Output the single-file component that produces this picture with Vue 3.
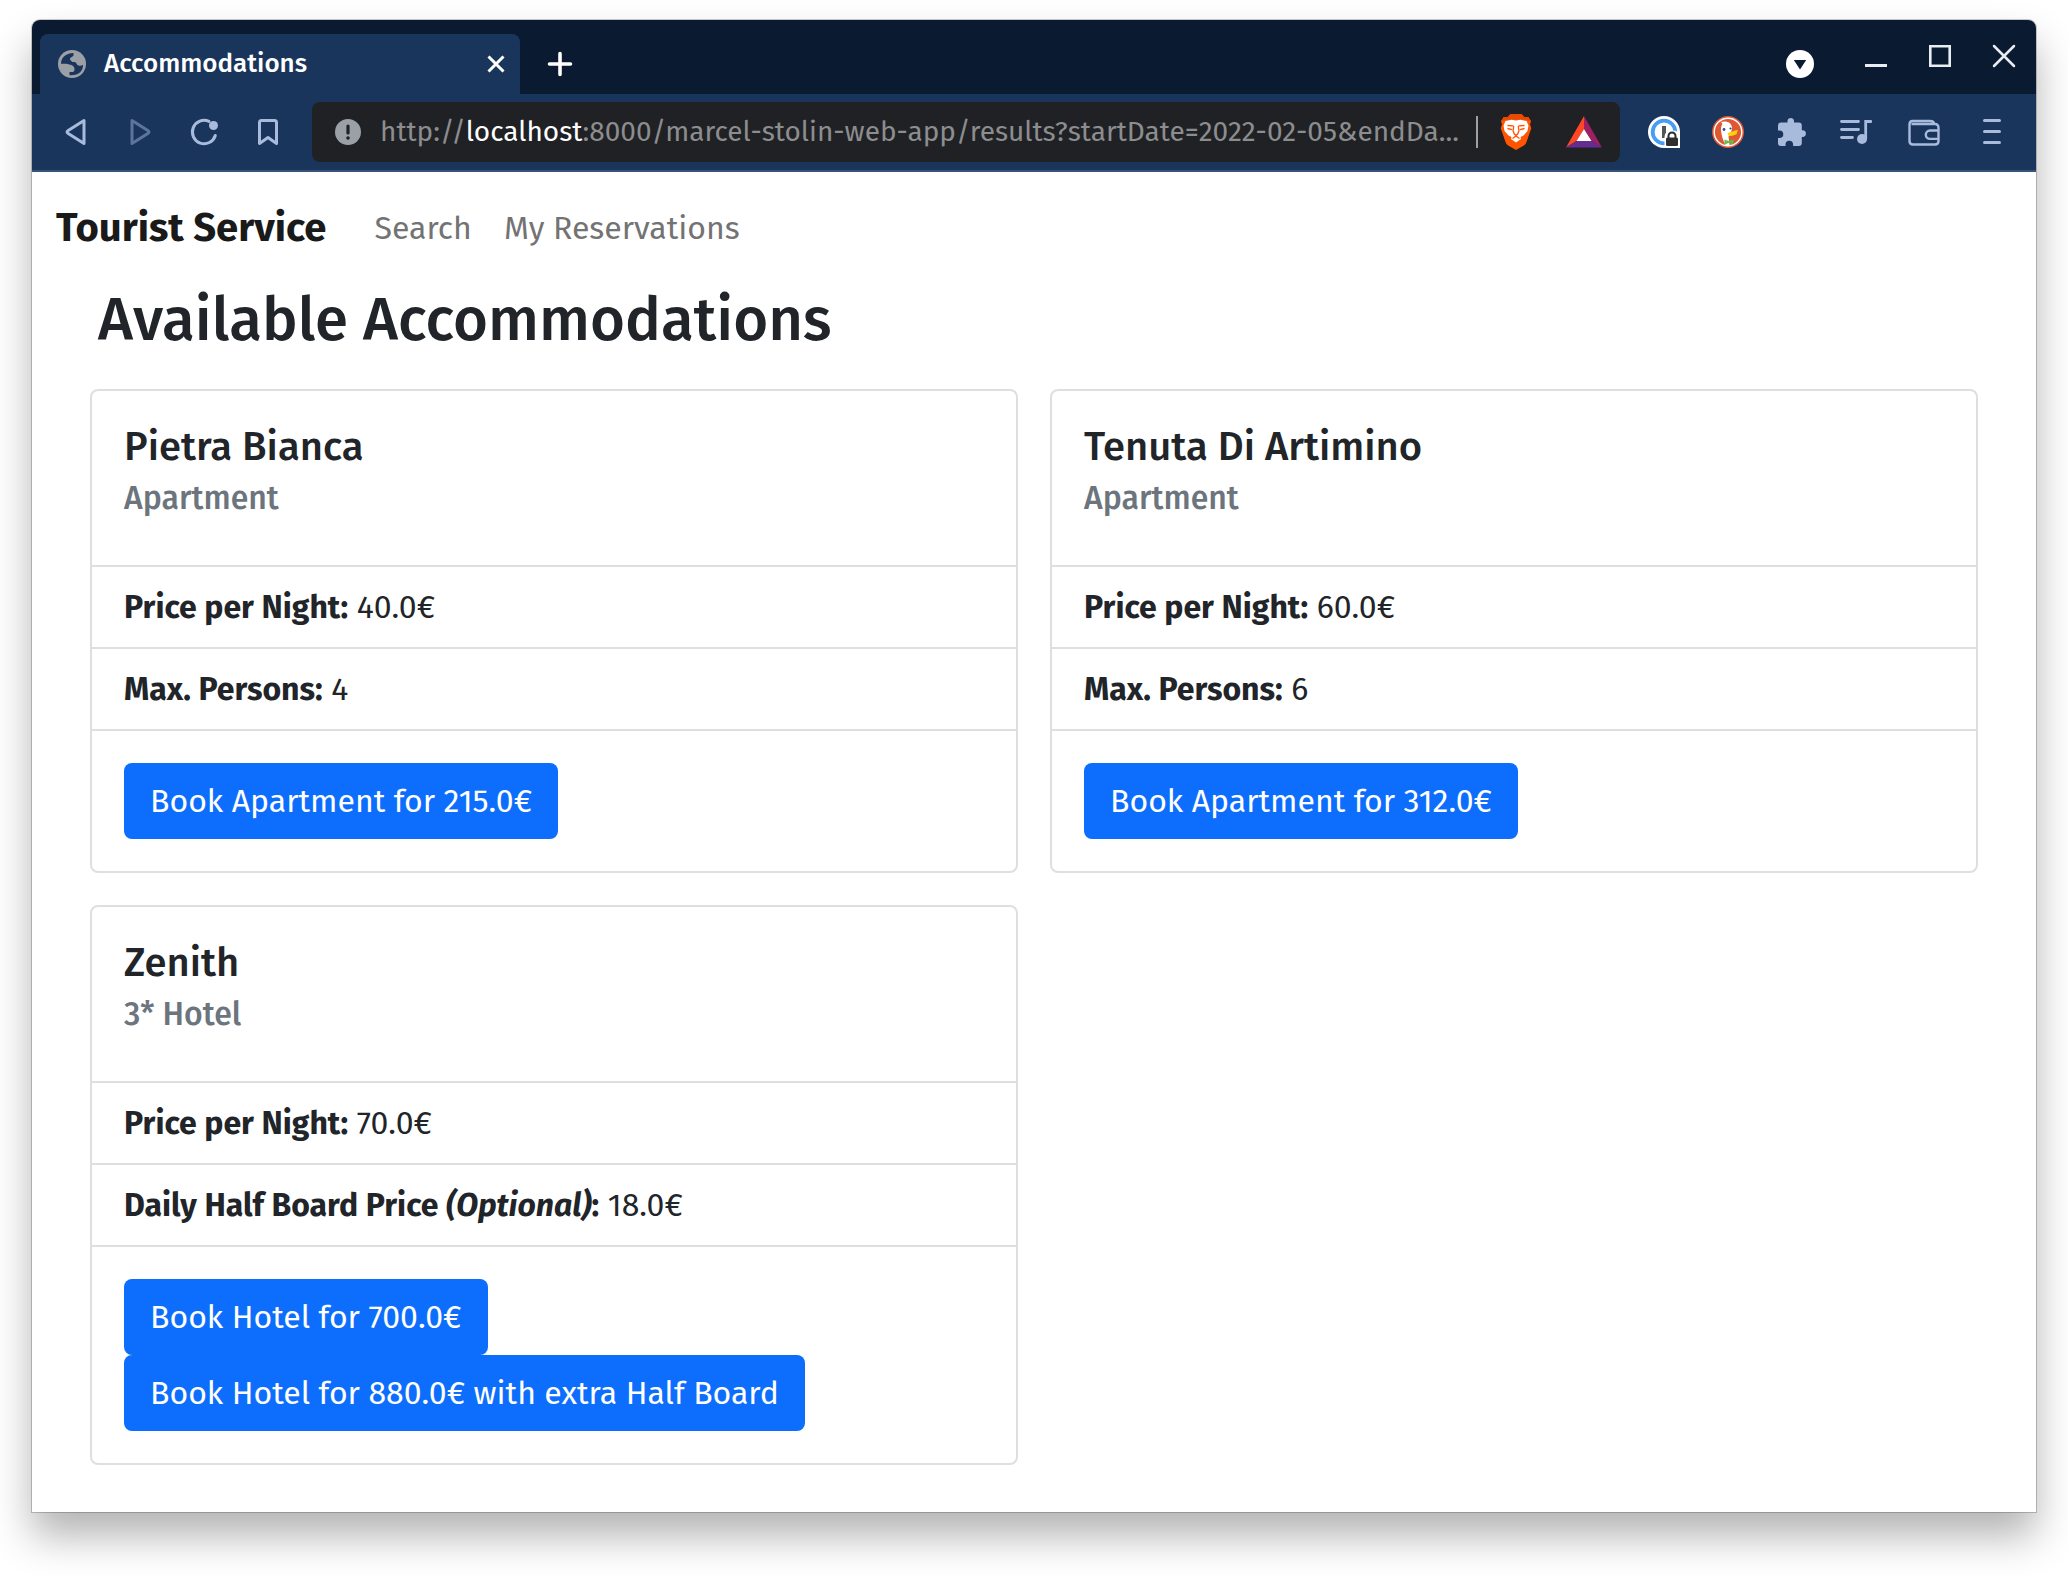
<script setup>
const navLinks = ['Search', 'My Reservations']

const accommodations = [
  {
    name: 'Pietra Bianca',
    kind: 'Apartment',
    facts: [
      { label: 'Price per Night', value: '40.0€' },
      { label: 'Max. Persons', value: '4' },
    ],
    offers: ['Book Apartment for 215.0€'],
  },
  {
    name: 'Tenuta Di Artimino',
    kind: 'Apartment',
    facts: [
      { label: 'Price per Night', value: '60.0€' },
      { label: 'Max. Persons', value: '6' },
    ],
    offers: ['Book Apartment for 312.0€'],
  },
  {
    name: 'Zenith',
    kind: '3* Hotel',
    facts: [
      { label: 'Price per Night', value: '70.0€' },
      { label: 'Daily Half Board Price', note: '(Optional)', value: '18.0€' },
    ],
    offers: ['Book Hotel for 700.0€', 'Book Hotel for 880.0€ with extra Half Board'],
  },
]
</script>

<template>
  <div class="desktop">
    <div class="window">
      <header class="titlebar">
        <div class="tab">
          <svg class="favicon" viewBox="0 0 28 28" width="28" height="28" aria-hidden="true">
            <circle cx="14" cy="14" r="14" fill="#9aa0a6" />
            <path d="M3 13.700C3 8 7.500 3.200 15.500 3v2c0 2-3.500 2-3.500 4s2 1.500 2 3h2.500c2 0 2 3 4 3.500s3 .2 4.500-.8c.3 6-4 11-13.500 10.500v-3.200H15c2-1 2-4 .5-5.500-1.500-2-5.500-2.800-12.500-2.800z" fill="#1a355b" />
          </svg>
          <span class="tab-title">Accommodations</span>
          <button class="icon-button" aria-label="Close tab">
            <svg viewBox="0 0 32 32" width="32" height="32"><path d="M8.500 8.500l15 15m0-15l-15 15" stroke="#fff" stroke-width="3" fill="none" /></svg>
          </button>
        </div>
        <button class="icon-button new-tab" aria-label="New tab">
          <svg viewBox="0 0 32 32" width="32" height="32"><path d="M16 5.500v21M5.500 16h21" stroke="#fff" stroke-width="3.600" stroke-linecap="round" /></svg>
        </button>
        <div class="window-controls">
          <button class="icon-button tab-search" aria-label="Search tabs">
            <svg viewBox="0 0 32 32" width="32" height="32"><circle cx="16" cy="16" r="14" fill="#fff" /><path d="M9.800 12h12.400L16 21.500z" fill="#0a1a31" /></svg>
          </button>
          <button class="icon-button" aria-label="Minimize">
            <svg viewBox="0 0 32 32" width="32" height="32"><path d="M5 25.500h22" stroke="#e9ecf0" stroke-width="3" /></svg>
          </button>
          <button class="icon-button" aria-label="Maximize">
            <svg viewBox="0 0 32 32" width="32" height="32"><path d="M6.300 6.300h19.400v19.400H6.300z" stroke="#e9ecf0" stroke-width="2.600" fill="none" /></svg>
          </button>
          <button class="icon-button" aria-label="Close">
            <svg viewBox="0 0 32 32" width="32" height="32"><path d="M6 6l20 20M26 6L6 26" stroke="#e9ecf0" stroke-width="2.500" stroke-linecap="round" /></svg>
          </button>
        </div>
      </header>

      <div class="toolbar">
        <div class="history">
          <button class="icon-button" aria-label="Back">
            <svg viewBox="0 0 32 32" width="32" height="32"><path d="M24 4.500v23L7.800 17.200q-1.500-1.200 0-2.400z" stroke="#a9bbdc" stroke-width="3" stroke-linejoin="round" fill="none" /></svg>
          </button>
          <button class="icon-button" aria-label="Forward">
            <svg viewBox="0 0 32 32" width="32" height="32"><path d="M8 4.500v23l16.200-10.300q1.500-1.200 0-2.400z" stroke="#5b759e" stroke-width="3" stroke-linejoin="round" fill="none" /></svg>
          </button>
          <button class="icon-button" aria-label="Reload">
            <svg viewBox="0 0 32 32" width="32" height="32"><path d="M21 5.400A11.700 11.700 0 1 0 27.300 19.500" stroke="#a9bbdc" stroke-width="3" stroke-linecap="round" fill="none" /><circle cx="25.500" cy="9.500" r="4.500" fill="#a9bbdc" /></svg>
          </button>
          <button class="icon-button" aria-label="Bookmark">
            <svg viewBox="0 0 32 32" width="32" height="32"><path d="M7.500 27.500V6.500q0-2 2-2h13q2 0 2 2v21L16 21.500z" stroke="#a9bbdc" stroke-width="3" stroke-linejoin="round" fill="none" /></svg>
          </button>
        </div>

        <div class="address">
          <svg class="info" viewBox="0 0 28 28" width="28" height="28" aria-hidden="true"><circle cx="14" cy="14" r="13" fill="#9aa0a6" /><path d="M14 8v7" stroke="#202124" stroke-width="3.200" stroke-linecap="round" /><circle cx="14" cy="20" r="1.800" fill="#202124" /></svg>
          <div class="url" role="textbox" aria-label="Address" contenteditable="true" spellcheck="false">http://<span class="host">localhost</span>:8000/marcel-stolin-web-app/results?startDate=2022-02-05&amp;endDa...</div>
          <span class="separator"></span>
          <button class="icon-button shield" aria-label="Shields">
            <svg viewBox="0 0 32 36" width="32" height="36">
              <path d="M10.500 0h11l3 3.200 3.700-.2 2.800 4.200-1 3 1.300 4L26.500 28q-.5 2-2.200 3.200L16 36l-8.300-4.800Q6 30 5.500 28L.7 14.200 2 10.200l-1-3L3.800 3l3.700.2z" fill="#ff5500" />
              <path d="M10.500 0h11l3 3.200 3.700-.2 2.800 4.200-5-1.700H6L1 7.200 3.800 3l3.700.2z" fill="#e64a05" />
              <path d="M16 6.500l4.500-.8L26.500 7l2 4.500-1 5.500-4 4.500-3 1.500.5 2L16 28.500 11 25l.5-2-3-1.500-4-4.500-1-5.500 2-4.500 6-1.300z" fill="#fff" />
              <path d="M7.500 11.500l5.500.3.700.8-.7 4 1.200 3.200L16 21.500l1.800-1.700 1.200-3.200-.7-4 .7-.8 5.500-.3M7.500 14.500l4.500 1.200M24.500 14.500L20 15.700M12.500 24.500L16 22l3.500 2.500" fill="none" stroke="#ff5500" stroke-width="1.300" />
            </svg>
          </button>
          <button class="icon-button rewards" aria-label="Rewards">
            <svg viewBox="0 0 36 32" width="36" height="32"><path d="M18 0v13L10.500 25 0 31.500z" fill="#ff4724" /><path d="M18 0l18 31.500L25.500 25 18 13z" fill="#9e1f63" /><path d="M0 31.500L10.500 25h15L36 31.500z" fill="#662d91" /><path d="M18 13l7.500 12h-15z" fill="#fff" /></svg>
          </button>
        </div>

        <div class="extensions">
          <button class="icon-button" aria-label="Password manager">
            <svg viewBox="0 0 32 32" width="32" height="32">
              <path d="M16 0a16 16 0 0 1 16 16v13q0 3-3 3H16a16 16 0 0 1 0-32z" fill="#fff" />
              <circle cx="16" cy="16" r="11.300" fill="#fff" stroke="#459df5" stroke-width="3.800" />
              <path d="M14 10h4v12h-4z" fill="#555" />
              <path d="M16.500 32V21q0-6.500 7.500-6.500T32 20v12z" fill="#fff" />
              <path d="M20.500 22v-2a3.500 3.500 0 0 1 7 0v2" stroke="#2e2e2e" stroke-width="2" fill="none" />
              <rect x="18" y="21.500" width="12" height="8.500" rx="1.500" fill="#2e2e2e" />
            </svg>
          </button>
          <button class="icon-button" aria-label="Privacy essentials">
            <svg viewBox="0 0 32 32" width="32" height="32">
              <circle cx="16" cy="16" r="16" fill="#de5833" />
              <circle cx="16" cy="16" r="13.800" fill="none" stroke="#fff" stroke-width="1.400" />
              <path d="M9 6l3.500-.5c4 0 7 2 7.500 6 .3 3-1.500 4.500-2 7l-1.500 2 1 8.500-3.500.5C11 25 9 18 9 13c0-2.500.8-4 1.500-5z" fill="#fff" />
              <circle cx="12" cy="13.500" r="1.400" fill="#2d4f8e" /><circle cx="18.500" cy="12.500" r="1.100" fill="#2d4f8e" />
              <path d="M17 16.500c3-.4 6.500-2.600 8.500-2.200.8.300.3 1.300-1 2 1 .3.800 1.500-1 2.500-2.500 1-5 1.500-7 .7-1.200-.8-1-2.500.5-3z" fill="#fdd20a" />
              <path d="M12.500 23.500l4 1.500 5-1.700v5L16.500 27l-4 1.500z" fill="#65bc46" />
            </svg>
          </button>
          <button class="icon-button" aria-label="Extensions">
            <svg viewBox="0 0 32 32" width="32" height="32"><path d="M26.500 14.200h-.7V9.500q0-3-3-3H18V4.800a3.300 3.300 0 0 0-6.500 0v1.700H5q-3 0-3 3v5h1.500a3.800 3.800 0 0 1 0 7.600H2v5.400Q2 30 5 30h4.500v-1.500a3.800 3.800 0 0 1 7.600 0V30h5.700q3 0 3-3v-6h.7a3.400 3.400 0 0 0 0-6.800z" fill="#a9bbdc" /></svg>
          </button>
          <button class="icon-button" aria-label="Media controls">
            <svg viewBox="0 0 32 32" width="32" height="32"><path d="M1.500 5.500h17M1.500 13.500h17M1.500 21.500h11M25.700 23V5.500H31" stroke="#a9bbdc" stroke-width="2.800" stroke-linecap="round" fill="none" /><circle cx="22" cy="23" r="5" fill="#a9bbdc" /></svg>
          </button>
          <button class="icon-button wide-gap" aria-label="Wallet">
            <svg viewBox="0 0 32 32" width="32" height="32"><path d="M1.500 8v17q0 3.500 3.500 3.500h22q3.500 0 3.500-3.500V12Q30.500 8 27 8H3.500M1.500 8.500q0-3.500 3-3.500H22q4 0 4 3M30.500 14.500H22a4.200 4.200 0 0 0 0 8.400h8.500" stroke="#a9bbdc" stroke-width="2.400" fill="none" /></svg>
          </button>
          <button class="icon-button wide-gap" aria-label="Menu">
            <svg viewBox="0 0 32 32" width="32" height="32"><path d="M8.500 4.500h15M8.500 15.500h15M8.500 26.500h15" stroke="#a9bbdc" stroke-width="3" stroke-linecap="round" /></svg>
          </button>
        </div>
      </div>

      <nav class="navbar">
        <a class="brand" href="#">Tourist Service</a>
        <a v-for="link in navLinks" :key="link" class="nav-link" href="#">{{ link }}</a>
      </nav>

      <main class="content">
        <h1>Available Accommodations</h1>
        <div class="cards">
          <article v-for="place in accommodations" :key="place.name" class="card">
            <div class="card-head">
              <h2>{{ place.name }}</h2>
              <h3>{{ place.kind }}</h3>
            </div>
            <ul class="facts">
              <li v-for="fact in place.facts" :key="fact.label">
                <b>{{ fact.label }}<template v-if="fact.note">&nbsp;<i>{{ fact.note }}</i></template>:</b> {{ fact.value }}
              </li>
            </ul>
            <div class="offers">
              <button v-for="offer in place.offers" :key="offer" class="book">{{ offer }}</button>
            </div>
          </article>
        </div>
      </main>
    </div>
  </div>
</template>

<style>
body {
  background: #fff;
}
</style>

<style scoped>
* {
  box-sizing: border-box;
}

.desktop {
  padding: 20px 32px 64px;
  font-family: "Fira Sans", "Noto Sans", sans-serif;
  color: #212529;
}

.window {
  padding-bottom: 47px;
  border-radius: 8px 8px 0 0;
  background: #fff;
  box-shadow: 0 0 0 1px rgba(0, 0, 0, 0.2), 0 24px 40px rgba(0, 0, 0, 0.3);
}

button {
  border: 0;
  padding: 0;
  background: none;
  font: inherit;
  cursor: pointer;
}

.icon-button {
  display: flex;
  flex: none;
  align-items: center;
  justify-content: center;
}

svg {
  display: block;
  flex: none;
}

.titlebar {
  display: flex;
  align-items: flex-start;
  height: 74px;
  padding: 14px 16px 0 8px;
  border-radius: 8px 8px 0 0;
  background: #0a1a31;
}

.tab {
  display: flex;
  flex: 0 1 480px;
  align-items: center;
  height: 60px;
  padding: 0 8px 0 18px;
  border-radius: 8px 8px 0 0;
  background: #1a355b;
}

.tab-title {
  flex: 1;
  padding-left: 18px;
  font-size: 26px;
  font-weight: 500;
  line-height: 32px;
  color: #fff;
}

.new-tab {
  height: 60px;
  margin-left: 24px;
}

.window-controls {
  display: flex;
  gap: 32px;
  align-items: flex-start;
  margin-left: auto;
  padding-top: 6px;
}

.tab-search {
  margin: 8px 12px 0 0;
}

.toolbar {
  display: flex;
  align-items: center;
  height: 78px;
  padding: 0 28px;
  border-bottom: 2px solid #3a5379;
  background: #1a355b;
}

.history,
.extensions {
  display: flex;
  gap: 32px;
}

.wide-gap {
  margin-left: 4px;
}

.address {
  display: flex;
  flex: 1;
  align-items: center;
  min-width: 0;
  height: 60px;
  margin: 0 28px;
  padding: 0 18px 0 22px;
  border-radius: 8px;
  background: #202124;
}

.url {
  flex: 1;
  min-width: 0;
  margin-left: 18px;
  overflow: hidden;
  outline: 0;
  font-size: 28px;
  line-height: 40px;
  white-space: nowrap;
  color: #8c8d8f;
}

.host {
  color: #fff;
}

.separator {
  width: 2px;
  height: 32px;
  margin-left: 12px;
  background: #9aa0a6;
}

.shield {
  margin: 0 34px 0 22px;
}

.navbar {
  display: flex;
  align-items: center;
  height: 112px;
  padding: 0 24px;
}

.navbar a {
  line-height: 48px;
  text-decoration: none;
  white-space: nowrap;
}

.brand {
  margin-right: 32px;
  font-size: 40px;
  font-weight: 700;
  color: #1a1a1a;
}

.nav-link {
  padding: 0 16px;
  font-size: 32px;
  color: #737373;
}

.content {
  padding: 0 58px;
}

h1,
h2,
h3 {
  margin: 0;
  font-weight: 500;
}

h1 {
  padding: 0 8px;
  margin-bottom: 33px;
  font-size: 60px;
  line-height: 72px;
}

.cards {
  display: grid;
  grid-template-columns: 1fr 1fr;
  gap: 32px;
  align-items: start;
}

.card {
  border: 2px solid #dfdfdf;
  border-radius: 8px;
}

.card-head {
  padding: 32px 32px 48px;
}

h2 {
  margin-bottom: 8px;
  font-size: 40px;
  line-height: 48px;
}

h3 {
  font-size: 32px;
  line-height: 38px;
  color: #6c757d;
}

.facts {
  margin: 0;
  padding: 0;
  border-bottom: 2px solid #dfdfdf;
  list-style: none;
}

.facts li {
  padding: 16px 32px;
  border-top: 2px solid #dfdfdf;
  font-size: 32px;
  line-height: 48px;
}

.facts b {
  font-weight: 700;
}

.offers {
  display: flex;
  flex-direction: column;
  align-items: flex-start;
  padding: 32px;
}

.book {
  padding: 14px 26px;
  border-radius: 8px;
  background: #0d6efd;
  font-size: 32px;
  line-height: 48px;
  color: #fff;
}
</style>
